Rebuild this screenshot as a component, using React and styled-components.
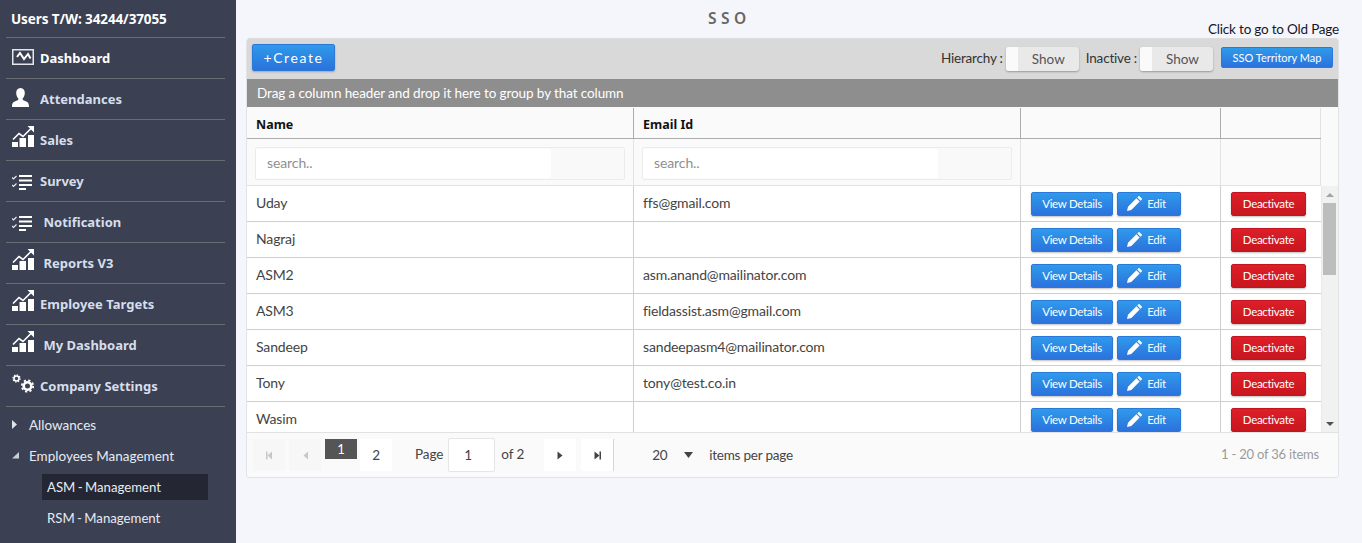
import React from "react";
import styled, { createGlobalStyle } from "styled-components";

const Global = createGlobalStyle`
  html, body { margin: 0; padding: 0; background: #f5f6fb; }
  body { font-family: Lato, "Noto Sans", sans-serif; overflow: hidden; font-variant-ligatures: none; }
  * { box-sizing: border-box; }
`;
const Page = styled.div`display: flex; width: 1362px; height: 543px; overflow: hidden;`;
const Side = styled.aside`width: 236px; flex: none; background: #3b4052; padding: 0 11px 0 6px; color: #dfe6ee;`;
const UsersLine = styled.div`height: 38px; padding: 10px 0 0 5px; font: 700 13.5px "Noto Sans", sans-serif; color: #fff; border-bottom: 1px solid #6a6c74; white-space: nowrap; letter-spacing: -.1px;`;
const Item = styled.div`height: 41px; display: flex; align-items: center; padding: 0 0 0 6px; border-bottom: 1px solid #6a6c74; font: 700 13px "Noto Sans", sans-serif; color: ${p => p.$on ? "#fff" : "#d5deea"}; white-space: nowrap;`;
const IconSlot = styled.span`width: ${p => p.$w}px; height: 24px; flex: none; display: flex; align-items: center; margin-top: ${p => p.$dy}px; svg { display: block; }`;
const Tree = styled.div`padding-top: 2px;`;
const TreeRow = styled.div`height: 31px; display: flex; align-items: center; padding-left: 6px; font: 400 13.5px Lato, sans-serif; color: #e6ebf2;`;
const Caret = styled.span`width: 17px; flex: none; svg { display: block; }`;
const SubList = styled.div`padding-top: 3px;`;
const Sub = styled.div`width: 166px; height: 26px; margin: 0 0 5px 36px; padding-left: 5px; display: flex; align-items: center; font: 400 13.2px Lato, sans-serif; word-spacing: -1px; color: #e6ebf2; background: ${p => p.$on ? "#242733" : "transparent"};`;
const Main = styled.main`flex: 1; padding: 0 23px 0 10px; min-width: 0;`;
const TitleRow = styled.div`height: 38px; position: relative;`;
const Title = styled.div`padding: 7px 0 0 462px; font: 600 15.5px "Noto Sans", sans-serif; letter-spacing: 4.5px; color: #666;`;
const OldLink = styled.div`position: absolute; right: 0; top: 21px; font: 400 13.5px Lato, sans-serif; letter-spacing: -.2px; color: #15152a;`;
const Card = styled.section`height: 440px; background: #fafafa; border: 1px solid #e2e3e7; border-top: 0; border-radius: 4px; overflow: hidden; display: flex; flex-direction: column;`;
const Toolbar = styled.div`height: 41px; flex: none; background: #d9d9d9; border-top: 1px solid #dcdcdc; display: flex; align-items: center; justify-content: space-between; padding: 0 5px 3px;`;
const Right = styled.div`display: flex; align-items: center;`;
const Blue = styled.button`border: 1px solid #2a78d8; border-radius: 2px; background: linear-gradient(#2f9aea, #2b72dd); color: #fff; padding: 0; box-shadow: 0 1px 2px rgba(0,0,0,.25);`;
const CreateBtn = styled(Blue)`width: 83px; height: 27px; font: 400 14px Lato, sans-serif; letter-spacing: 1.6px;`;
const MapBtn = styled(Blue)`width: 112px; height: 21px; margin-left: 1px; font: 400 11px Lato, sans-serif; box-shadow: none; white-space: nowrap;`;
const Label = styled.span`font: 400 13.5px Lato, sans-serif; letter-spacing: -.2px; color: #333; margin-right: 3px;`;
const Toggle = styled.div`width: 73px; height: 24px; margin: 2px 7px 0 0; background: #e9e9e9; border-radius: 3px; box-shadow: 0 1px 2px rgba(0,0,0,.3); display: flex; font: 400 13.5px Lato, sans-serif; color: #555; overflow: hidden;`;
const Knob = styled.span`width: 12px; background: #fafafa;`;
const ToggleText = styled.span`flex: 1; text-align: center; line-height: 25px;`;
const GroupBar = styled.div`height: 29px; flex: none; background: #8e8e8e; border-bottom: 1px solid #fafafa; color: #fff; padding: 0 0 0 10px; font: 400 13.5px Lato, sans-serif; line-height: 28px; letter-spacing: -.1px;`;
const Grid = styled.div`display: grid; grid-template-columns: 387px 387px 200px 100px; width: 1074px;`;
const HeadRow = styled(Grid)`height: 31px; border-bottom: 1px solid #ababab; flex: none;`;
const Head = styled.div`border-right: 1px solid #ababab; padding: 8px 0 0 9px; font: 700 12.5px "Noto Sans", sans-serif; color: #111; &:last-child { border-right: 1px solid #e2e2e2; }`;
const FilterRow = styled(Grid)`height: 47px; flex: none; border-bottom: 1px solid #e2e2e2;`;
const FilterCell = styled.div`border-right: 1px solid #e2e2e2; padding: 8px;`;
const FilterBox = styled.div`height: 33px; border: 1px solid #ececec; border-radius: 2px; display: flex; background: #f9f9f9;`;
const FilterInput = styled.div`width: 295px; background: #fff; margin: 1px 0; padding: 0 0 0 11px; font: 400 14px Lato, sans-serif; letter-spacing: -.1px; color: #8f8f8f; line-height: 28px;`;
const Body = styled.div`flex: none; height: 247px; display: flex; background: #fff; border-bottom: 1px solid #e2e2e2; overflow: hidden;`;
const Rows = styled.div`width: 1074px; flex: none;`;
const Row = styled(Grid)`height: 36px; border-bottom: 1px solid #cfcfcf;`;
const Cell = styled.div`border-right: 1px solid #cfcfcf; padding: 0 0 3px 9px; display: flex; align-items: center; font: 400 14px Lato, sans-serif; letter-spacing: -.15px; color: #444; &:last-child { border-right: 0; }`;
const Actions = styled(Cell)`padding: 0 0 0 10px; gap: 4px;`;
const Small = styled(Blue)`height: 24px; font: 400 11.5px Lato, sans-serif; letter-spacing: -.3px; width: ${p => p.$w}px; display: flex; align-items: center; justify-content: center; gap: 5px; border-radius: 2px;`;
const EditBtn = styled(Small)`padding-right: 5px;`;
const Red = styled.button`width: 75px; height: 24px; border: 1px solid #c4141f; border-radius: 2px; background: linear-gradient(#dd1f29, #c8161f); color: #fff; padding: 0; font: 400 11.5px Lato, sans-serif; letter-spacing: -.3px; box-shadow: 0 1px 2px rgba(0,0,0,.25);`;
const Scroll = styled.div`flex: 1; background: #f1f1f1; border-left: 1px solid #e9e9e9; display: flex; flex-direction: column; align-items: center; padding: 7px 2px 6px 1px;`;
const Thumb = styled.div`width: 13px; height: 72px; background: #bdbdbd; margin-top: 6px;`;
const Arrow = styled.div`width: 0; height: 0; border-left: 4px solid transparent; border-right: 4px solid transparent; ${p => p.$down ? "border-top: 4px solid #505050; margin-top: auto;" : "border-bottom: 4px solid #a3a3a3;"}`;
const Pager = styled.footer`flex: 1; display: flex; align-items: flex-start; padding: 6px 19px 0 6px; font: 400 13.5px Lato, sans-serif; letter-spacing: -.1px; color: #444; background: #fafafa;`;
const PageBtn = styled.div`width: 32px; height: 32px; background: ${p => p.$dim ? "#f7f7f7" : "#fff"}; display: flex; align-items: center; justify-content: center; margin: 0 ${p => p.$mr ?? 4}px 0 ${p => p.$ml || 0}px; color: #444;`;
const Current = styled.div`width: 32px; height: 20px; margin: 0 3px 0 0; background: #555; color: #fff; text-align: center; line-height: 20px; font-size: 13px;`;
const PageLabel = styled.span`line-height: 30px;`;
const PageInput = styled.div`width: 47px; height: 34px; margin: -1px 6px 0 5px; background: #fff; border: 1px solid #e6e6e6; border-radius: 2px; line-height: 33px; padding-left: 15px;`;
const Sep = styled.div`width: 1px; height: 32px; background: #d5d5d5;`;
const SizeBox = styled.div`width: 57px; height: 32px; margin-left: 38px; display: flex; align-items: center; justify-content: space-between; padding-right: 16px;`;
const Tail = styled.span`line-height: 32px; letter-spacing: -.2px;`;
const Count = styled.span`margin-left: auto; line-height: 31px; color: #9a9a9a; font-size: 13px; letter-spacing: -.2px;`;

const Chart = () => <svg width="22" height="21" viewBox="0 0 22 21" fill="#fff"><path d="M0 16h6v5H0zM7.500 12H14v9H7.500zM16 9h6v12h-6z" /><path d="M1 13.500 7 7.500l4 3L19.500 2" fill="none" stroke="#fff" strokeWidth="1.600" /><path d="M15.500 0H22v6.500z" /></svg>;
const Pulse = () => <svg width="22" height="16" viewBox="0 0 22 16"><rect x=".75" y=".75" width="20.500" height="14.500" fill="none" stroke="#e4e6ea" strokeWidth="1.500" /><path d="M5 8 8 4l4 6 4-5 2.500 4.500" fill="none" stroke="#fff" strokeWidth="2" /></svg>;
const User = () => <svg width="17" height="19" viewBox="0 0 17 19" fill="#fff"><path d="M8.500 0c2.900 0 4.300 2.200 4.300 5 0 2.200-.8 4.300-2.200 5.400-.3 1.300.6 1.900 2.600 2.700 2.500 1 3.800 1.900 3.800 5.900H0c0-4 1.300-4.900 3.800-5.900 2-.8 2.900-1.400 2.600-2.700C5 9.300 4.200 7.200 4.200 5 4.200 2.200 5.600 0 8.500 0z" /></svg>;
const Check = () => <svg width="20" height="15" viewBox="0 0 20 15" fill="#fff"><path d="M7 0h13v2H7zM7 4.500h13v2H7zM7 9h13v2H7zM7 13h7v2H7z" /><path d="m0 2.500 1.500 1.500L4.500 1M0 10l1.500 1.500 3-3" fill="none" stroke="#eee" strokeWidth="1.200" /></svg>;
const Gears = () => <svg width="22" height="19" viewBox="0 0 22 19" fill="none" stroke="#fff"><circle cx="4.500" cy="4.500" r="2.500" strokeWidth="1.600" /><circle cx="4.500" cy="4.500" r="3.600" strokeWidth="1.200" strokeDasharray="1.400 1.400" /><circle cx="15.500" cy="12" r="3.800" strokeWidth="2.600" /><circle cx="15.500" cy="12" r="5.700" strokeWidth="1.800" strokeDasharray="2.240 2.240" /></svg>;
const Pencil = () => <svg width="15" height="15" viewBox="0 0 15 15" fill="#fff"><path d="M0 15 1 10.700 9.400 2.300 12.700 5.600 4.300 14zM10.300 1.400l1.200-1.200a.7.7 0 0 1 1 0l2.300 2.300a.7.7 0 0 1 0 1l-1.200 1.200z" /></svg>;
const Tri = ({ d, c = "#444", bar }) => {
  const left = d === "l";
  return <svg width="9" height="9" viewBox="0 0 9 9" fill={c}>
    <path d={left ? "M7 .5v8L2.500 4.500z" : "M1.500 .5v8L6.500 4.500z"} />
    {bar && <rect x={left ? 1 : 6.500} y=".5" width="1.500" height="8" />}
  </svg>;
};

const menu = [
  ["Dashboard", <Pulse />, 28, -2, true], ["Attendances", <User />, 28, -3], ["Sales", <Chart />, 28, -7], ["Survey", <Check />, 28, 2],
  ["Notification", <Check />, 31.500, 2], ["Reports V3", <Chart />, 31.500, -7], ["Employee Targets", <Chart />, 28, -7], ["My Dashboard", <Chart />, 31.500, -7], ["Company Settings", <Gears />, 28, -5],
];
const rows = [["Uday", "ffs@gmail.com"], ["Nagraj", ""], ["ASM2", "asm.anand@mailinator.com"], ["ASM3", "fieldassist.asm@gmail.com"], ["Sandeep", "sandeepasm4@mailinator.com"], ["Tony", "tony@test.co.in"], ["Wasim", ""]];

export default function App() {
  return <Page><Global />
    <Side>
      <UsersLine>Users T/W: 34244/37055</UsersLine>
      {menu.map(([t, ic, w, dy, on]) => <Item key={t} $on={on}><IconSlot $w={w} $dy={dy}>{ic}</IconSlot>{t}</Item>)}
      <Tree>
        <TreeRow><Caret><svg width="6" height="9" viewBox="0 0 6 9" fill="#dfe3ea"><path d="M0 0v9l5-4.500z" /></svg></Caret>Allowances</TreeRow>
        <TreeRow><Caret><svg width="8" height="7" viewBox="0 0 8 7" fill="#c9ced6"><path d="M7 0v6.500H0z" /></svg></Caret>Employees Management</TreeRow>
        <SubList>
          <Sub $on>ASM - Management</Sub>
          <Sub>RSM - Management</Sub>
        </SubList>
      </Tree>
    </Side>
    <Main>
      <TitleRow><Title>SSO</Title><OldLink>Click to go to Old Page</OldLink></TitleRow>
      <Card>
        <Toolbar>
          <CreateBtn>+Create</CreateBtn>
          <Right>
            <Label>Hierarchy :</Label><Toggle><Knob /><ToggleText>Show</ToggleText></Toggle>
            <Label>Inactive :</Label><Toggle><Knob /><ToggleText>Show</ToggleText></Toggle>
            <MapBtn>SSO Territory Map</MapBtn>
          </Right>
        </Toolbar>
        <GroupBar>Drag a column header and drop it here to group by that column</GroupBar>
        <HeadRow><Head>Name</Head><Head>Email Id</Head><Head /><Head /></HeadRow>
        <FilterRow>
          <FilterCell><FilterBox><FilterInput>search..</FilterInput></FilterBox></FilterCell>
          <FilterCell><FilterBox><FilterInput>search..</FilterInput></FilterBox></FilterCell>
          <FilterCell /><FilterCell />
        </FilterRow>
        <Body>
          <Rows>
            {rows.map(([n, e]) => <Row key={n}>
              <Cell>{n}</Cell><Cell>{e}</Cell>
              <Actions><Small $w={82}>View Details</Small><EditBtn $w={64}><Pencil />Edit</EditBtn></Actions>
              <Actions><Red>Deactivate</Red></Actions>
            </Row>)}
          </Rows>
          <Scroll><Arrow /><Thumb /><Arrow $down /></Scroll>
        </Body>
        <Pager>
          <PageBtn $dim><Tri d="l" c="#c8c8c8" bar /></PageBtn>
          <PageBtn $dim><Tri d="l" c="#c8c8c8" /></PageBtn>
          <Current>1</Current>
          <PageBtn $mr={23}>2</PageBtn>
          <PageLabel>Page</PageLabel><PageInput>1</PageInput><PageLabel>of 2</PageLabel>
          <PageBtn $ml={20} $mr={5}><Tri d="r" /></PageBtn>
          <PageBtn $mr={0}><Tri d="r" bar /></PageBtn>
          <Sep />
          <SizeBox><span>20</span><svg width="9" height="6" viewBox="0 0 9 6" fill="#444"><path d="M0 0h9L4.500 6z" /></svg></SizeBox>
          <Tail>items per page</Tail>
          <Count>1 - 20 of 36 items</Count>
        </Pager>
      </Card>
    </Main>
  </Page>;
}
